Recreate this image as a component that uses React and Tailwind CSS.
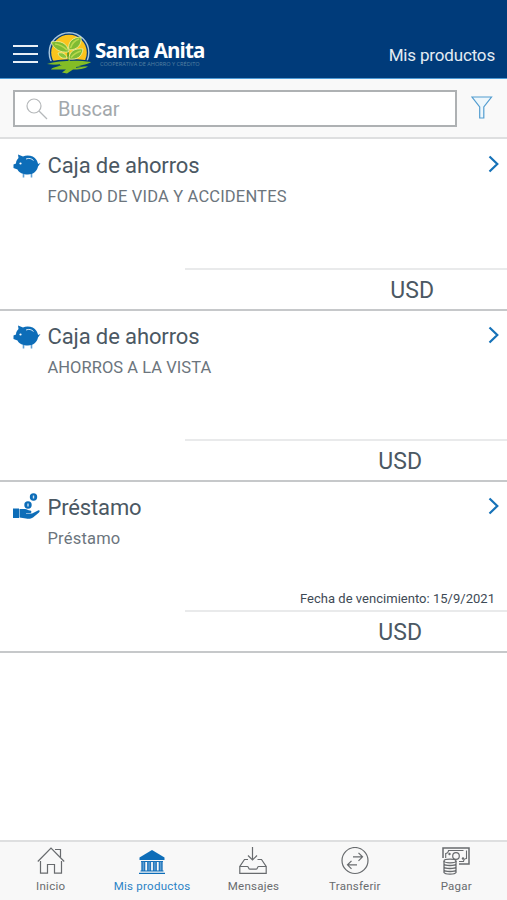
import { useState } from "react";

const products = [
  {
    id: 1,
    icon: "pig",
    title: "Caja de ahorros",
    titleClass: "tracking-[-0.12px]",
    detail: "FONDO DE VIDA Y ACCIDENTES",
    detailClass: "tracking-[0.17px]",
    currencyClass: "pr-[73px]",
  },
  {
    id: 2,
    icon: "pig",
    title: "Caja de ahorros",
    titleClass: "tracking-[-0.12px]",
    detail: "AHORROS A LA VISTA",
    detailClass: "tracking-[0.04px]",
    currencyClass: "pr-[85px]",
  },
  {
    id: 3,
    icon: "loan",
    title: "Préstamo",
    titleClass: "tracking-[-0.15px]",
    detail: "Préstamo",
    detailClass: "tracking-[0.2px]",
    currencyClass: "pr-[85px]",
    dueDate: "15/9/2021",
  },
];

const Logo = () => (
  <svg width="44" height="42" viewBox="0 0 44 42" className="shrink-0">
    <circle cx="22" cy="20.5" r="19.8" fill="#063d79" stroke="#a9c6dc" strokeWidth="1.4" />
    <circle cx="22" cy="20.5" r="17.8" fill="#fbc41c" />
    <path d="M0 30 C10 27 32 26 44 29 L44 42 H0 Z" fill="#003b7a" />
    <path d="M23 31 C20.500 25 21 19 21.500 17" fill="none" stroke="#5c9e22" strokeWidth="1.8" />
    <path d="M4 10 C13 8 21 11 21.500 20 C13 21 7 17 4 10 Z" fill="#7fbb33" stroke="#f4f3a4" strokeWidth="0.8" />
    <path d="M22 18 C20 9 27 5 34 5 C35 12 31 18 22 18 Z" fill="#7fbb33" stroke="#f4f3a4" strokeWidth="0.8" />
    <path d="M22 27 C22 19 28 16 36 17 C35 25 30 28 22 27 Z" fill="#7fbb33" stroke="#f4f3a4" strokeWidth="0.8" />
    <path d="M20 26 C15 27 12 25 11 21 C16 20 19 22 20 26 Z" fill="#8ac43b" stroke="#f4f3a4" strokeWidth="0.8" />
    <path d="M8 12 C13 12.500 17 15 20 18 M23.500 16 C25 11 29 8 32 7 M24 25.500 C27 22 30 20 34 19" fill="none" stroke="#b9d94d" strokeWidth="1.6" />
    <path
      d="M0 32 C12 28.500 30 28 44 30 C42 32 36 33 32 33.500 L41 34.500 C38 37 31 37.500 26 37.500 L20 41.500 L15 40.500 L19 37.500 L4 37.500 C5 35.500 12 34 15 33.500 Z"
      fill="#83bd26"
    />
    <path d="M3 34 L13 32.500 M29 35.500 L40 33.500" stroke="#003b7a" strokeWidth="0.8" />
  </svg>
);

const PigIcon = () => (
  <svg width="28" height="24" viewBox="0 0 28 24">
    <path
      d="M5 0.500 L10 2.500 C14 0.500 21 1.500 23.500 6 C24.500 8 25 9 25 10 L27.500 9 L25 12.500 C24 17 20.500 20.500 15 20.500 C10 20.500 6 19 4.500 15.500 L0.500 14 L0.500 10.500 L3 9.500 C3 7 4 5.500 5.500 4 Z"
      fill="#0d6db8"
    />
    <path d="M10.500 20 V23.500 M18.500 20 V23.500" stroke="#5fa0d3" strokeWidth="1.6" />
    <path d="M13 5 C16 3.800 18.500 4.500 20.500 6.500" fill="none" stroke="#d5e7f5" strokeWidth="1" />
    <circle cx="7.500" cy="9.500" r="1.1" fill="#fff" />
  </svg>
);

const LoanIcon = () => (
  <svg width="28" height="27" viewBox="0 0 28 27">
    <path d="M0 15.500 H6 V25 H0 Z" fill="#0d6db8" />
    <path
      d="M6.500 16 H12 C14 16 15 17.500 17 17.500 C18.500 17.500 19 19.500 17.500 20 H13 V20.500 H19 L25 17.500 C26.500 17 27.500 18 26 19.500 L20 24.500 C18 26 15 26 13 25.500 L6.500 24.500 Z"
      fill="#0d6db8"
    />
    <circle cx="15" cy="12" r="3.700" fill="#0d6db8" />
    <circle cx="20.500" cy="4" r="3.700" fill="#0d6db8" />
    <path d="M15 10.500 V13.500 M20.500 2.500 V5.500" stroke="#cfe2f2" strokeWidth="1.400" />
  </svg>
);

const HomeIcon = () => (
  <svg width="28" height="28" viewBox="0 0 28 28" fill="none" stroke="currentColor" strokeWidth="1.2">
    <path d="M0.800 14.500 L14 1.200 L27.200 14.500 M18 2.500 H23.500 V10" />
    <path d="M3.500 14 V26.200 H10.500 V17.500 H17.500 V26.200 H24.500 V14" />
  </svg>
);

const BankIcon = () => (
  <svg width="28" height="28" viewBox="0 0 28 28">
    <path d="M14 3 L26.500 10.500 V13 H1.500 V10.500 Z" fill="#0d6db8" />
    <path d="M3 14.500 H25" stroke="#0d6db8" strokeWidth="1" />
    <path d="M5.300 14.500 V24 M11.100 14.500 V24 M16.900 14.500 V24 M22.700 14.500 V24" stroke="#2478be" strokeWidth="4" />
    <path d="M5.300 15 V24 M11.100 15 V24 M16.900 15 V24 M22.700 15 V24" stroke="#8dbbe0" strokeWidth="0.700" />
    <path d="M2.500 24 H25.500 M1 26.300 H27" stroke="#0d6db8" strokeWidth="1.200" />
  </svg>
);

const InboxIcon = () => (
  <svg width="28" height="28" viewBox="0 0 28 28" fill="none" stroke="currentColor" strokeWidth="1.2">
    <path d="M13.500 0 V13 M9 8.500 L13.500 13 L18 8.500" />
    <path d="M9 12.500 H5.500 L0.800 19.500 V26.300 H27.200 V19.500 L22.500 12.500 H18.500" />
    <path d="M0.800 19.500 H8.500 C9.500 19.500 9.500 22.200 11 22.200 H17 C18.500 22.200 18.500 19.500 19.500 19.500 H27.200" />
  </svg>
);

const TransferIcon = () => (
  <svg width="28" height="28" viewBox="0 0 28 28" fill="none" stroke="currentColor" strokeWidth="1.2">
    <circle cx="14" cy="13.500" r="13" />
    <path d="M12 9.800 H21.500 M17.500 5.800 L21.500 9.800 L17.500 13.800" />
    <path d="M16 17.800 H6.500 M10.500 13.800 L6.500 17.800 L10.500 21.800" />
  </svg>
);

const PayIcon = () => (
  <svg width="28" height="28" viewBox="0 0 28 28" fill="none" stroke="currentColor">
    <path d="M1 11 V1 H27 V17 H17" strokeWidth="1.5" />
    <path d="M3.700 11 V6.500 C5.200 6.500 6.500 5 6.500 3.500 H21.500 M24.500 3.500 V11.500 C23 11.500 21.500 13 21.500 14.500 H17" strokeWidth="1.1" />
    <circle cx="14" cy="9" r="3.300" strokeWidth="1.200" />
    <circle cx="7.500" cy="7" r="1.2" fill="currentColor" stroke="none" />
    <circle cx="21" cy="11.500" r="1.2" fill="currentColor" stroke="none" />
    <ellipse cx="8" cy="14" rx="6" ry="1.800" fill="#f8f8f8" strokeWidth="1.200" />
    <path
      d="M2 14 V25.500 C3 27.600 13 27.600 14 25.500 V14 M2 17 C3 19 13 19 14 17 M2 20 C3 22 13 22 14 20 M2 23 C3 25 13 25 14 23"
      strokeWidth="1.300"
    />
  </svg>
);

const tabs = [
  { label: "Inicio", Icon: HomeIcon },
  { label: "Mis productos", Icon: BankIcon },
  { label: "Mensajes", Icon: InboxIcon },
  { label: "Transferir", Icon: TransferIcon },
  { label: "Pagar", Icon: PayIcon },
];

const ProductRow = ({ product }) => (
  <li className="flex h-[171px] flex-col border-b-2 border-[#c6c8ca]">
    <div className="flex flex-1 pl-[13px] pr-[7px]">
      <div className={`w-[34.5px] shrink-0 ${product.icon === "pig" ? "pt-[14px]" : "pt-[11px]"}`}>
        {product.icon === "pig" ? <PigIcon /> : <LoanIcon />}
      </div>
      <div className="flex-1">
        <h2 className={`mt-[12px] text-[22px] leading-[28px] text-[#4b5863] ${product.titleClass}`}>
          {product.title}
        </h2>
        <p className={`mt-[6px] text-[16.5px] leading-[22px] text-[#6c757d] ${product.detailClass}`}>
          {product.detail}
        </p>
      </div>
      <svg width="12" height="18" viewBox="0 0 12 18" className="mt-[15px]">
        <path d="M1.500 1.500 L9.300 9 L1.500 16.500" fill="none" stroke="#1672b8" strokeWidth="2.2" />
      </svg>
    </div>
    {product.dueDate && (
      <p className="mb-[2px] pr-[12px] text-right text-[13px] leading-[18px] tracking-[0.02px] text-[#3e4a55]">
        Fecha de vencimiento: {product.dueDate}
      </p>
    )}
    <div
      className={`ml-[185px] h-[41px] border-t-2 border-[#e9eaeb] text-right text-[23px] leading-[42px] text-[#4b5863] ${product.currencyClass}`}
    >
      USD
    </div>
  </li>
);

const App = () => {
  const [search, setSearch] = useState("");
  const [active, setActive] = useState("Mis productos");

  return (
    <div className="flex h-[900px] w-[507px] flex-col overflow-hidden bg-white font-['Roboto',sans-serif]">
      <header className="flex h-[79px] shrink-0 items-start justify-between border-b border-[#4e9bd6] bg-[#003b7a] pl-[13px] pr-[12px]">
        <div className="flex">
          <button type="button" aria-label="Menú" className="mt-[45px] flex h-[18px] w-[25px] flex-col justify-between">
            <span className="h-[2px] w-full bg-[#e8eff6]" />
            <span className="h-[2px] w-full bg-[#e8eff6]" />
            <span className="h-[2px] w-full bg-[#e8eff6]" />
          </button>
          <div className="ml-[9px] mt-[32px] flex">
            <Logo />
            <div className="ml-[4px] mt-[7px] whitespace-nowrap font-['Open_Sans',sans-serif]">
              <div className="text-[20.500px] font-bold leading-[22px] tracking-[-0.85px] text-white">Santa Anita</div>
              <div className="pl-[5px] text-[5.600px] leading-[7px] text-[#5681a2]">
                COOPERATIVA DE AHORRO Y CRÉDITO
              </div>
            </div>
          </div>
        </div>
        <h1 className="mt-[43px] text-[17px] leading-[24px] tracking-[-0.17px] text-[#e3ebf3]">Mis productos</h1>
      </header>

      <div className="flex h-[60px] shrink-0 items-start border-b-2 border-[#dedfe0] bg-[#f9f9f9] pl-[13px] pt-[11px]">
        <label className="flex h-[37px] w-[444px] items-center border-2 border-[#aeb1b3] bg-white pl-[11px]">
          <svg width="22" height="22" viewBox="0 0 22 22" fill="none" stroke="#b5b8ba" strokeWidth="1.2">
            <circle cx="8" cy="8" r="7" />
            <path d="M13 13 L21 21" />
          </svg>
          <input
            value={search}
            onChange={(e) => setSearch(e.target.value)}
            placeholder="Buscar"
            className="ml-[10px] w-[300px] text-[20px] leading-[28px] tracking-[-0.1px] text-[#4b5863] outline-none placeholder:text-[#a3a8ac]"
          />
        </label>
        <svg width="22" height="24" viewBox="0 0 22 24" className="ml-[14px] mt-[6px]">
          <path d="M1 1 H20.500 L12.800 11 V22 H8.700 V11 Z" fill="#eef7fc" stroke="#539dd0" strokeWidth="1.2" />
        </svg>
      </div>

      <ul className="flex-1 pt-px">
        {products.map((product) => (
          <ProductRow key={product.id} product={product} />
        ))}
      </ul>

      <nav className="grid h-[60px] shrink-0 grid-cols-5 border-t-2 border-[#dedfe0] bg-[#f8f8f8]">
        {tabs.map(({ label, Icon }) => (
          <button
            key={label}
            type="button"
            onClick={() => setActive(label)}
            className={`flex flex-col items-center pt-[5px] ${active === label ? "text-[#2b83c6]" : "text-[#686b6e]"}`}
          >
            <Icon />
            <span className="mt-[3px] whitespace-nowrap text-[11.500px] leading-[16px] tracking-[0.25px]">{label}</span>
          </button>
        ))}
      </nav>
    </div>
  );
};

export default App;
